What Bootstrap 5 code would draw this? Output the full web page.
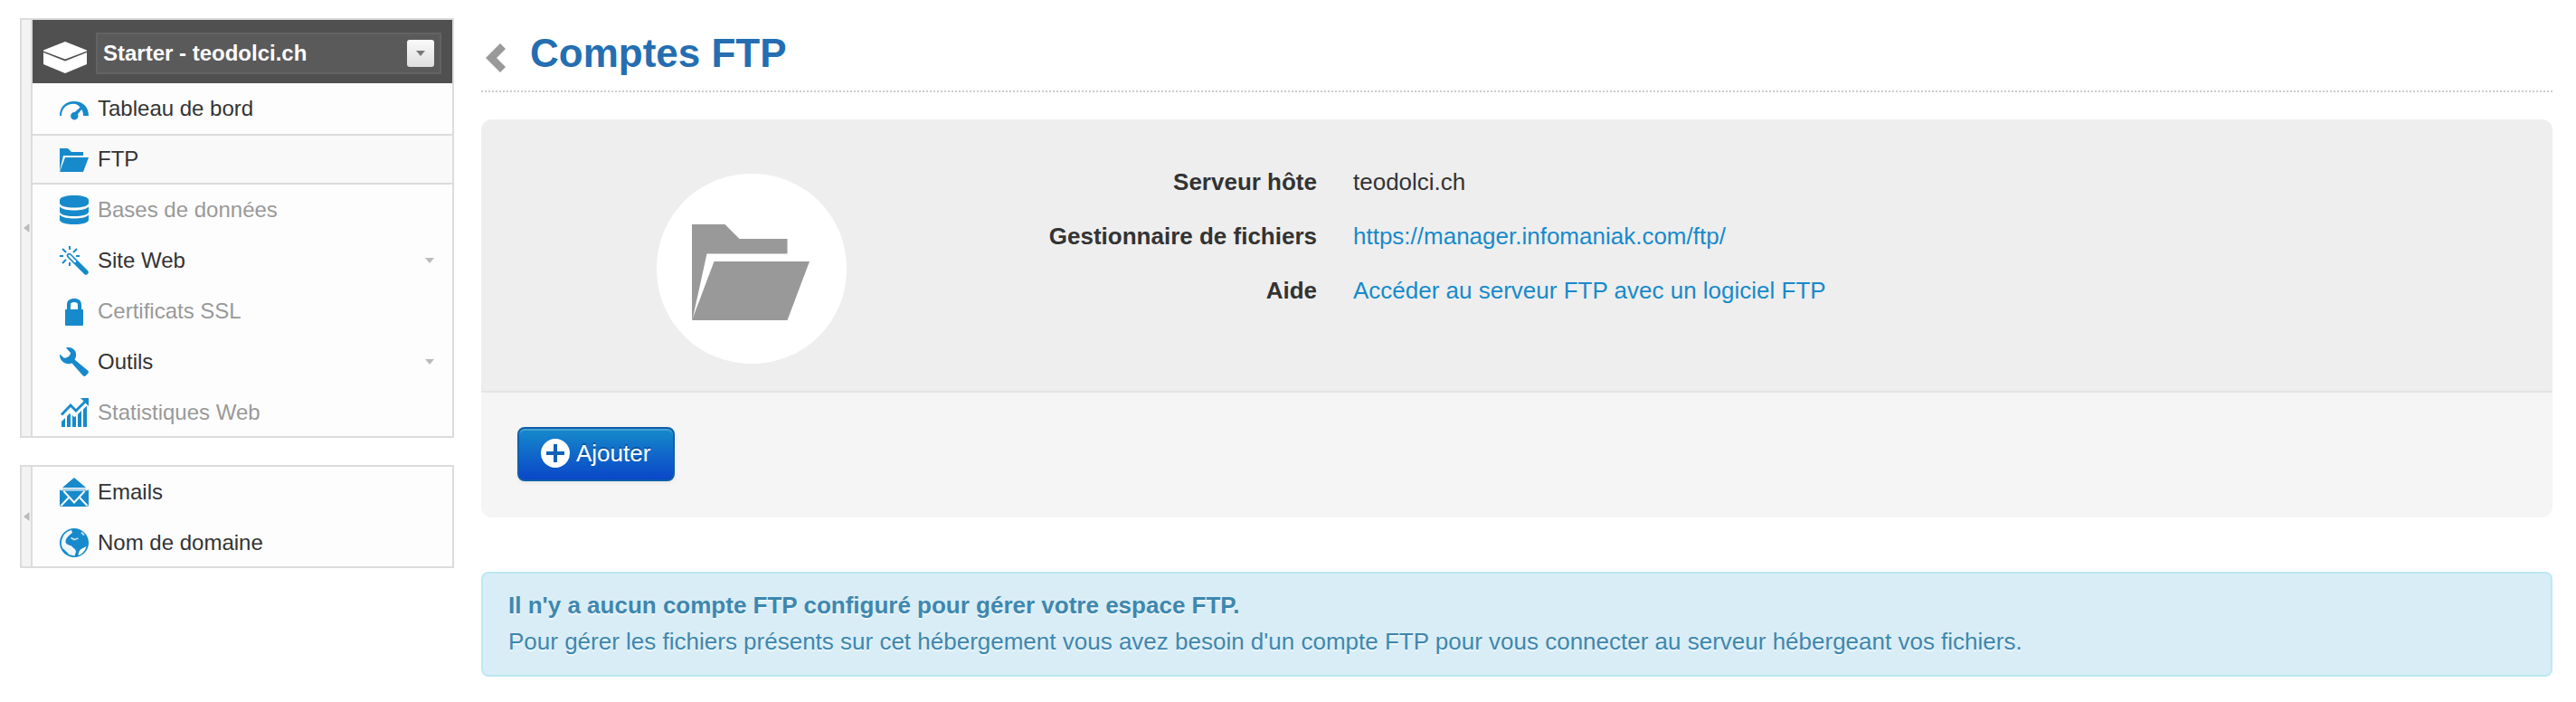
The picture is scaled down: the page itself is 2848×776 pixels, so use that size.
<!DOCTYPE html>
<html lang="fr">
<head>
<meta charset="utf-8">
<meta name="viewport" content="width=device-width, initial-scale=1">
<title>Comptes FTP</title>
<link rel="stylesheet" href="https://cdn.jsdelivr.net/npm/bootstrap@5.3.0/dist/css/bootstrap.min.css">
<style>
body{font-family:"Liberation Sans",Arial,sans-serif;font-size:26px;line-height:40px;color:#333;background:#fff}
svg{display:block;flex:none}
.page{padding:20px 26px 28px 22px;gap:30px}
.side{width:480px;gap:30px;font-size:24px;flex:none}
.side-box{border:2px solid #dcdcdc;background:#fdfdfd}
.side-handle{width:12px;background:#f3f3f3;border-right:2px solid #dcdcdc;padding-left:2px;flex:none}
.side-head{height:70px;background:#505050;padding:14px 12px 10px}
.side-pick{height:46px;margin-left:10px;padding:0 6px;background:#5a5a5a;border:2px solid #636363;color:#fff;font-weight:bold;line-height:36px}
.pick-btn{width:30px;height:30px;border-radius:3px;background:linear-gradient(#fafafa,#dedede);padding:0;border:0}
.side-list{margin:0 0 -2px}
.side-item{height:56px;padding:0 20px 0 30px;gap:10px;color:#333;text-decoration:none;line-height:56px}
.side-item.current{background:#f9f9f9;border-top:2px solid #dcdcdc;border-bottom:2px solid #dcdcdc;line-height:52px}
.side-item.off{color:#999}
.side-item svg.ico{width:32px;height:32px;fill:#178acb;color:#178acb}
.page-head{height:82px;border-bottom:2px dotted #ccc;padding:0 0 0 5px;gap:27px}
.page-head h1{font-size:44px;line-height:50px;font-weight:bold;color:#246eb1;margin:14px 0 0}
.page-head svg{margin-top:28px}
.panel{margin-top:30px;border-radius:12px;background:#f5f5f5;overflow:hidden}
.panel-top{height:302px;background:#eee;border-bottom:2px solid #e4e4e4;padding:49px 0 0 194px}
.disc{width:210px;height:210px;border-radius:104px;background:#fff;margin-top:11px;padding:56px 0 0 39px;flex:none}
.info{grid-template-columns:520px auto;gap:20px 40px}
.info dt{text-align:right;font-weight:bold}
.info dd{margin:0}
.info a{color:#178acb;text-decoration:none}
.panel-foot{height:138px;padding:38px 40px}
.btn-add{width:174px;height:60px;border:2px solid #0e5fa9;border-radius:8px;background:linear-gradient(#168acb,#0a46c8);color:#fff;font-size:26px;line-height:36px;padding:0 0 2px 24px;gap:7px;box-shadow:inset 0 2px 0 rgba(255,255,255,.2),0 2px 4px rgba(0,0,0,.06);text-shadow:0 -2px 0 rgba(0,0,0,.25)}
.btn-add:hover{color:#fff}
.notice{margin:60px 0 0;height:116px;padding:15px 28px;border:2px solid #bce8f1;border-radius:8px;background:#d9edf6;color:#3e87ae;text-shadow:0 2px 0 rgba(255,255,255,.5)}
.notice strong{display:block}
</style>
</head>
<body>
<div class="page d-flex align-items-start">
  <nav class="side d-flex flex-column">
    <div class="side-box d-flex">
      <div class="side-handle d-flex align-items-center"><svg width="7" height="10" viewBox="0 0 7 10"><path d="M6.500 0v10L0 5z" fill="#bbb"/></svg></div>
      <div class="flex-grow-1">
        <div class="side-head d-flex align-items-start">
          <svg class="mt-2" width="48" height="37" viewBox="0 -2 48 37" fill="#fff"><path d="M24 0 48 9.500V10.500L24 19.500 0 10.500V9.500z"/><path d="M0 12 24 21.500 48 12V25L24 35 0 25z"/></svg>
          <div class="side-pick d-flex flex-grow-1 align-items-center justify-content-between"><span>Starter - teodolci.ch</span>
            <button class="pick-btn d-flex align-items-center justify-content-center" type="button" aria-label="Choisir"><svg width="10" height="6" viewBox="0 0 10 6"><path d="M0 0h10L5 6z" fill="#777"/></svg></button></div>
        </div>
        <div class="side-list">
          <a class="side-item d-flex align-items-center" href="#"><svg class="ico" viewBox="0 0 32 32"><path d="M0 24C0 14 6.500 8 16 8s16 6 16 16h-6c0-3-.6-5.200-1.800-7L20 22.200A4.200 4.200 0 1 1 16.600 20l6-5.300C20.600 12.200 18.200 10.800 15.500 10.800 7 10.800 2 16.500 2 24z"/></svg><span>Tableau de bord</span></a>
          <a class="side-item current d-flex align-items-center" href="#"><svg class="ico" viewBox="0 0 32 32"><path d="M0 4h9l4 4h13v4H4L0 29z"/><path d="M6 14h26l-6 16H0z"/></svg><span>FTP</span></a>
          <a class="side-item off d-flex align-items-center" href="#"><svg class="ico" viewBox="0 0 32 32"><path d="M0 5C0 2 7 0 16 0s16 2 16 5V8.500c0 3-7 5-16 5s-16-2-16-5z"/><path d="M0 12.500c3 3 9 4 16 4s13-1 16-4v5.500c0 3-7 5-16 5S0 21 0 18z"/><path d="M0 21.500C3 24.500 9 25.500 16 25.500s13-1 16-4V27c0 3-7 5-16 5S0 30 0 27z"/></svg><span>Bases de données</span></a>
          <a class="side-item d-flex align-items-center" href="#"><svg class="ico" viewBox="0 0 32 32"><g fill="none" stroke="currentColor" stroke-width="2"><path d="M11 0v4M11 18v4M0 11h4M18 11h4M3 3l4 4M19 3l-4 4M3 19l4-4"/><path d="M10.500 10.500 29 29" stroke-width="5.400" stroke-linecap="round"/><path d="M10.700 10.700 17 17" stroke="#fdfdfd" stroke-width="2.400" stroke-linecap="round"/></g></svg><span>Site Web</span><svg class="ms-auto" width="10" height="6" viewBox="0 0 10 6"><path d="M0 0h10L5 6z" fill="#bbb"/></svg></a>
          <a class="side-item off d-flex align-items-center" href="#"><svg class="ico" viewBox="0 0 32 32"><path fill-rule="evenodd" d="M8 14V9c0-5 3.200-7 8-7s8 2 8 7v5h1.200q.8 0 .8.800V31q0 1-1 1H7q-1 0-1-1V14.800q0-.8.800-.800zm4 0h8V9c0-2.200-1.500-3-4-3s-4 .8-4 3z"/></svg><span>Certificats SSL</span></a>
          <a class="side-item d-flex align-items-center" href="#"><svg class="ico" viewBox="0 0 32 32"><path d="M7 .5C13-1.200 18.500 3 18 8.500c0 2-.5 3.500-1.500 5L31 25.500q1.500 1.500.5 3l-3 3q-1.500 1-3-.5L13.500 17.500C6.500 20-.5 15 0 7.500l4.500 4c2 1 7.500-1.500 7.500-5.500z"/></svg><span>Outils</span><svg class="ms-auto" width="10" height="6" viewBox="0 0 10 6"><path d="M0 0h10L5 6z" fill="#bbb"/></svg></a>
          <a class="side-item off d-flex align-items-center" href="#"><svg class="ico" viewBox="0 0 32 32"><path d="M2 26l4-4v10H2zM8 20l3-3 1 1v14H8zM14 19l2 2 2-1v12h-4zM20 18l4-4v18h-4zM26 12.500l4-4V32h-4z"/><path d="M2 18.500 12 8l6 6L28.500 3.500" fill="none" stroke="currentColor" stroke-width="2.800"/><path d="M23 0h9v9z"/></svg><span>Statistiques Web</span></a>
        </div>
      </div>
    </div>
    <div class="side-box d-flex">
      <div class="side-handle d-flex align-items-center"><svg width="7" height="10" viewBox="0 0 7 10"><path d="M6.500 0v10L0 5z" fill="#bbb"/></svg></div>
      <div class="side-list flex-grow-1">
        <a class="side-item d-flex align-items-center" href="#"><svg class="ico" viewBox="0 0 32 32"><path d="M16 0 29 11H3z"/><path d="M3 11.800h26v2.200H3z" opacity=".35"/><path d="M0 13.500 3 14.500h26l3-1V30q0 2-2 2H2q-2 0-2-2z"/><path d="M4.500 15 16 27.500 27.500 15M1.500 31l8.500-9M30.500 31 22 22" fill="none" stroke="#fff" stroke-width="1.900"/></svg><span>Emails</span></a>
        <a class="side-item d-flex align-items-center" href="#"><svg class="ico" viewBox="0 0 32 32"><circle cx="16" cy="16" r="16"/><path d="M13 1.800C10 3 6 4.500 4 8.500 1.500 13 1 18 3.500 22.500 6 27 10 29.500 16.500 30.500L18 26c0-3-3-4-5-6.500C10 18.500 6.500 17.500 6.500 14.500 7 10.500 10 8 14 5z" fill="#fff" opacity=".92"/><path d="M29.500 20C28 25 25 28.500 20.500 29.800 21 25 23 23 25.500 22z" fill="#fff"/><path d="M12.500 10.500 16 12.500 20.500 11M24 4.500l3 3" fill="none" stroke="#fff" stroke-width="1.800" opacity=".75"/><path d="M4 22.500 9.500 28 8 29 3.500 25z"/></svg><span>Nom de domaine</span></a>
      </div>
    </div>
  </nav>
  <main class="flex-grow-1">
    <header class="page-head d-flex align-items-start">
      <svg width="22" height="32" viewBox="0 0 22 32"><path d="M16 0 22 6 12 16 22 26 16 32 0 16z" fill="#999"/></svg>
      <h1>Comptes FTP</h1>
    </header>
    <section class="panel">
      <div class="panel-top d-flex align-items-start">
        <div class="disc"><svg width="130" height="106" viewBox="0 0 130 106" fill="#999"><path d="M0 0h36.500l16 16h53v16.500h-89L1.500 101 0 106z"/><path d="M24.500 41H130l-24.500 65H0z"/></svg></div>
        <dl class="info d-grid mb-0">
          <dt>Serveur hôte</dt><dd>teodolci.ch</dd>
          <dt>Gestionnaire de fichiers</dt><dd><a href="#">https://manager.infomaniak.com/ftp/</a></dd>
          <dt>Aide</dt><dd><a href="#">Accéder au serveur FTP avec un logiciel FTP</a></dd>
        </dl>
      </div>
      <div class="panel-foot">
        <button class="btn btn-add d-flex align-items-center" type="button"><svg width="32" height="32" viewBox="0 0 32 32"><circle cx="16" cy="16" r="16" fill="#fff"/><path d="M16 6v20M6 16h20" stroke="#0f62b5" stroke-width="4"/></svg>Ajouter</button>
      </div>
    </section>
    <div class="alert notice"><strong>Il n'y a aucun compte FTP configuré pour gérer votre espace FTP.</strong>Pour gérer les fichiers présents sur cet hébergement vous avez besoin d'un compte FTP pour vous connecter au serveur hébergeant vos fichiers.</div>
  </main>
</div>
<script src="https://cdn.jsdelivr.net/npm/bootstrap@5.3.0/dist/js/bootstrap.bundle.min.js"></script>
</body>
</html>
